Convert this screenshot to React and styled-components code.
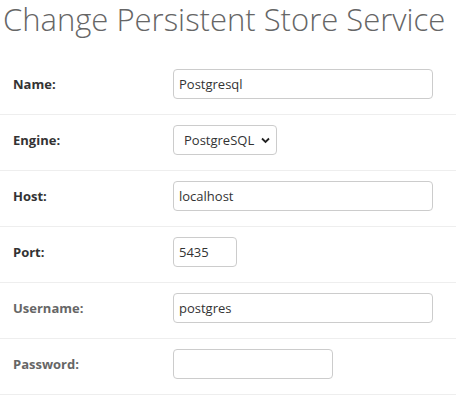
import React from "react";
import styled, { createGlobalStyle } from "styled-components";

const GlobalStyle = createGlobalStyle`
  html, body {
    margin: 0;
    padding: 0;
    background: #fff;
  }
  body {
    font-family: "Open Sans", "Noto Sans", sans-serif;
    color: #333;
  }
`;

const Page = styled.div`
  width: 456px;
  height: 395px;
  overflow: hidden;
`;

const Title = styled.h1`
  margin: 0;
  padding: 0 0 0 3px;
  height: 59px;
  font-size: 31px;
  line-height: 38px;
  font-weight: 300;
  color: #666;
  white-space: nowrap;
`;

const Row = styled.div`
  display: flex;
  align-items: center;
  height: 56px;
  padding: 10px 0 15px 13px;
  box-sizing: border-box;
  border-bottom: 1px solid #eee;
`;

const Label = styled.label`
  width: 160px;
  flex: none;
  font-size: 13px;
  font-weight: 700;
  color: ${props => (props.optional ? "#666" : "#333")};
`;

const Input = styled.input`
  box-sizing: border-box;
  width: ${props => props.w}px;
  height: 30px;
  padding: 0 5px;
  border: 1px solid #ccc;
  border-radius: 4px;
  font-family: "Open Sans", "Noto Sans", sans-serif;
  font-size: 13px;
  color: #333;
  background: #fff;
  outline: none;
`;

const SelectBox = styled.div`
  position: relative;
  box-sizing: border-box;
  width: 104px;
  height: 30px;
  border: 1px solid #ccc;
  border-radius: 4px;
  display: flex;
  align-items: center;
  padding: 0 0 0 10px;
  font-size: 13px;
  color: #333;
  background: #fff;
`;

const Chevron = styled.svg`
  position: absolute;
  right: 6px;
  top: 11px;
`;

const fields = [
  { label: "Name", kind: "input", value: "Postgresql", w: 260 },
  { label: "Engine", kind: "select", value: "PostgreSQL" },
  { label: "Host", kind: "input", value: "localhost", w: 260 },
  { label: "Port", kind: "input", value: "5435", w: 64 },
  { label: "Username", kind: "input", value: "postgres", w: 260, optional: true },
  { label: "Password", kind: "input", value: "", w: 160, optional: true },
];

const App = () => (
  <Page>
    <GlobalStyle />
    <Title>Change Persistent Store Service</Title>
    {fields.map(f => (
      <Row key={f.label}>
        <Label optional={f.optional}>{f.label}:</Label>
        {f.kind === "select" ? (
          <SelectBox>
            {f.value}
            <Chevron width="9" height="7" viewBox="0 0 9 7">
              <path d="M1 1.5 L4.5 5 L8 1.5" fill="none" stroke="#222" strokeWidth="1.8" />
            </Chevron>
          </SelectBox>
        ) : (
          <Input w={f.w} defaultValue={f.value} />
        )}
      </Row>
    ))}
  </Page>
);

export default App;
